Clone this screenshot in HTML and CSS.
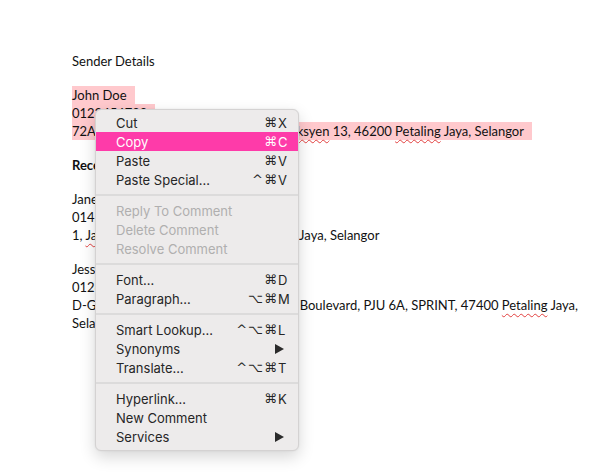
FILE: index.html
```html
<!DOCTYPE html>
<html lang="en">
<head>
  <meta charset="UTF-8">
  <title>Sender Details</title>
  <link rel="stylesheet" href="styles.css">
</head>
<body>
  <div class="page">
    <p>Sender Details</p>
    <p class="blank"></p>
    <p><span class="hl">John Doe</span></p>
    <p><span class="hl">0123456789</span></p>
    <p><span class="hl">72A, Jalan Universiti, Off Jalan 13/6, <span class="typo">Seksyen</span> 13, 46200 <span class="typo">Petaling</span> Jaya, Selangor</span></p>
    <p class="blank"></p>
    <p><strong>Receiver Details</strong></p>
    <p class="blank"></p>
    <p>Jane Smith</p>
    <p>0145678912</p>
    <p>1, <span class="typo">Jalan</span> SS 2/75A, SS 2, 47300 Petaling Jaya, Selangor</p>
    <p class="blank"></p>
    <p>Jessica Tan</p>
    <p>0126789345</p>
    <p>D-G-15A, Jalan PJU 6A/3A, Damansara Boulevard, PJU 6A, SPRINT, 47400 <span class="typo">Petaling</span> Jaya,</p>
    <p>Selangor</p>
  </div>

  <!-- Context menu -->
  <div class="menu">
    <div class="menu-item"><span class="label">Cut</span><span class="key"><span class="mods">⌘</span><span class="letter">X</span></span></div>
    <div class="menu-item active"><span class="label">Copy</span><span class="key"><span class="mods">⌘</span><span class="letter">C</span></span></div>
    <div class="menu-item"><span class="label">Paste</span><span class="key"><span class="mods">⌘</span><span class="letter">V</span></span></div>
    <div class="menu-item"><span class="label">Paste Special…</span><span class="key"><span class="mods">^⌘</span><span class="letter">V</span></span></div>
    <div class="menu-sep"></div>
    <div class="menu-item disabled"><span class="label">Reply To Comment</span></div>
    <div class="menu-item disabled"><span class="label">Delete Comment</span></div>
    <div class="menu-item disabled"><span class="label">Resolve Comment</span></div>
    <div class="menu-sep"></div>
    <div class="menu-item"><span class="label">Font…</span><span class="key"><span class="mods">⌘</span><span class="letter">D</span></span></div>
    <div class="menu-item"><span class="label">Paragraph…</span><span class="key"><span class="mods">⌥⌘</span><span class="letter">M</span></span></div>
    <div class="menu-sep"></div>
    <div class="menu-item"><span class="label">Smart Lookup…</span><span class="key"><span class="mods">^⌥⌘</span><span class="letter">L</span></span></div>
    <div class="menu-item"><span class="label">Synonyms</span><svg class="arrow" width="9" height="10" viewBox="0 0 9 10"><path d="M0 0L9 5L0 10Z" fill="#2b2b2b"/></svg></div>
    <div class="menu-item"><span class="label">Translate…</span><span class="key"><span class="mods">^⌥⌘</span><span class="letter">T</span></span></div>
    <div class="menu-sep"></div>
    <div class="menu-item"><span class="label">Hyperlink…</span><span class="key"><span class="mods">⌘</span><span class="letter">K</span></span></div>
    <div class="menu-item"><span class="label">New Comment</span></div>
    <div class="menu-item"><span class="label">Services</span><svg class="arrow" width="9" height="10" viewBox="0 0 9 10"><path d="M0 0L9 5L0 10Z" fill="#2b2b2b"/></svg></div>
  </div>
</body>
</html>
```

FILE: styles.css
```css
/* Document page */
body {
  margin: 0;
  background-color: #fff;
  font-family: Lato, "Open Sans", sans-serif;
  font-size: 13px;
  color: #111;
}

.page {
  padding: 52px 0 0 72px;
}

.page p {
  margin: 0;
  line-height: 18px;
  white-space: nowrap;
}

.page p.blank {
  height: 16px;
}

.page strong {
  font-weight: 700;
}

/* Pink text highlight */
.hl {
  background-color: #ffc9cd;
  padding: 1px 8px 1px 0;
}

/* Spelling squiggle */
.typo {
  text-decoration: underline wavy #e2403f;
  text-decoration-thickness: 1px;
  text-underline-offset: 3px;
}

/* Context menu (floats over the page) */
.menu {
  position: absolute;
  left: 95px;
  top: 109px;
  width: 202px;
  padding: 3px 0 4px;
  background-color: #edebeb;
  border: 1px solid #d4d2d2;
  border-radius: 6px;
  box-shadow: 0 6px 16px rgba(0, 0, 0, 0.16), 0 0 2px rgba(0, 0, 0, 0.08);
  font-family: Inter, "DejaVu Sans", sans-serif;
  font-size: 13px;
  color: #262626;
}

.menu-item {
  display: flex;
  align-items: center;
  height: 19px;
  padding: 0 9px 0 20px;
}

.menu-item .label {
  flex: 1;
}

.menu-item.active {
  background-color: #fe3ba9;
  color: #fff;
}

.menu-item.disabled {
  color: #b0afaf;
}

.key {
  display: flex;
}

.mods {
  font-family: "DejaVu Sans", sans-serif;
  font-size: 13px;
  letter-spacing: 1px;
}

.letter {
  width: 11px;
}

.arrow {
  margin-right: 5px;
}

.menu-sep {
  height: 2px;
  margin: 5px 0;
  background-color: #dcdbdb;
}
```
